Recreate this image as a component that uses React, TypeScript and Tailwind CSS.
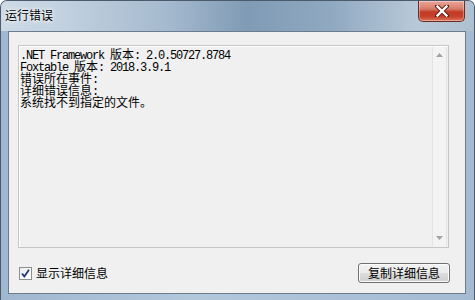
import React from 'react';

const cjk = "font-['Microsoft_YaHei','Noto_Sans_CJK_SC',sans-serif]";

function Mono({ children }: { children: React.ReactNode }) {
  return (
    <span className="font-['Liberation_Mono',monospace] text-[12px] tracking-[-1.2px]">{children}</span>
  );
}

function CloseButton() {
  return (
    <div className="absolute right-[9px] top-0 flex h-[21px] w-[47px] items-center justify-center rounded-b-[5px] border border-t-0 border-[#6b2a22] bg-[linear-gradient(180deg,#e9a899_0%,#d67a68_40%,#c13a24_55%,#c7432c_80%,#e07a60_100%)] shadow-[inset_0_0_0_1px_rgba(255,255,255,0.35)]">
      <svg width="14" height="12" viewBox="0 0 14 12">
        <path d="M2 1 L12 11 M12 1 L2 11" stroke="#5a1a12" strokeWidth="4.2" strokeLinecap="square" />
        <path d="M2.5 1.5 L11.5 10.5 M11.5 1.5 L2.5 10.5" stroke="#ffffff" strokeWidth="2.4" strokeLinecap="square" />
      </svg>
    </div>
  );
}

function Checkbox() {
  return (
    <div className="flex h-[13px] w-[13px] items-center justify-center border border-[#8e8f8f] bg-[linear-gradient(135deg,#e9ecef,#ffffff)]">
      <svg width="11" height="11" viewBox="0 0 11 11">
        <path d="M2 5.5 L4.3 8.5 L9 1.8" fill="none" stroke="#21357a" strokeWidth="1.8" />
      </svg>
    </div>
  );
}

function Arrow({ up }: { up?: boolean }) {
  return (
    <svg width="7" height="4" viewBox="0 0 7 4">
      <path d={up ? 'M0 4 L3.5 0 L7 4 Z' : 'M0 0 L3.5 4 L7 0 Z'} fill="#a3a3a3" />
    </svg>
  );
}

export default function App() {
  return (
    <div className="relative flex h-[300px] w-[475px] flex-col overflow-hidden rounded-t-[7px] border border-b-0 border-[#4b5b6c] bg-[linear-gradient(90deg,#9fb7cf_0%,#b3c7db_40%,#a4bbd2_100%)]">
      {/* title bar */}
      <div className="relative h-[30px] shrink-0 bg-[linear-gradient(90deg,#cddae6_0%,#c3d2e0_12%,#a5bacf_35%,#809bb5_52%,#90a9c1_70%,#b8c9d9_88%,#aec0d1_100%)]">
        <div className={`${cjk} absolute left-[4px] top-[6px] text-[12px] leading-[16px] text-black [text-shadow:0_0_6px_#ffffff,0_0_3px_#ffffff]`}>
          运行错误
        </div>
        <CloseButton />
      </div>

      <div className="flex min-h-0 flex-1 pl-[7px] pr-[9px] pb-[6px]">
        {/* client area */}
        <div className="flex flex-1 flex-col border border-[#6b7c8e] bg-[#f0f0f0] pl-[9px] pr-[16px] pt-[13px]">
          <div className="relative h-[203px] w-[431px] border border-[#c6c6c6] bg-[#f0f0f0] shadow-[inset_1px_1px_0_#ffffff]">
            <div className={`${cjk} whitespace-pre pl-[1px] pt-[2px] text-[12px] leading-[12px] text-black`}>
              <div className="h-[12px]"><Mono>.NET Framework </Mono>版本<Mono>: 2.0.50727.8784</Mono></div>
              <div className="h-[12px]"><Mono>Foxtable </Mono>版本<Mono>: 2018.3.9.1</Mono></div>
              <div className="h-[12px]">错误所在事件<Mono>:</Mono></div>
              <div className="h-[12px]">详细错误信息<Mono>:</Mono></div>
              <div className="h-[12px]">系统找不到指定的文件。</div>
            </div>
            {/* disabled scrollbar */}
            <div className="absolute bottom-[1px] right-[1px] top-[1px] flex w-[15px] flex-col items-center justify-between border-x border-[#e3e3e3] bg-[#f3f3f3] py-[6px]">
              <Arrow up />
              <Arrow />
            </div>
          </div>

          <div className="mt-[15px] flex items-center justify-between pl-[1px]">
            <div className="flex items-center gap-[4px]">
              <Checkbox />
              <span className={`${cjk} text-[12px] leading-[16px] text-black`}>显示详细信息</span>
            </div>
            <button className={`${cjk} -mr-[1px] flex h-[20px] w-[92px] items-center justify-center rounded-[3px] border border-[#707070] bg-[linear-gradient(180deg,#f2f2f2_0%,#ebebeb_50%,#dddddd_51%,#cfcfcf_100%)] text-[12px] leading-[16px] text-black shadow-[inset_0_0_0_1px_#fcfcfc]`}>
              复制详细信息
            </button>
          </div>
        </div>
      </div>
    </div>
  );
}
